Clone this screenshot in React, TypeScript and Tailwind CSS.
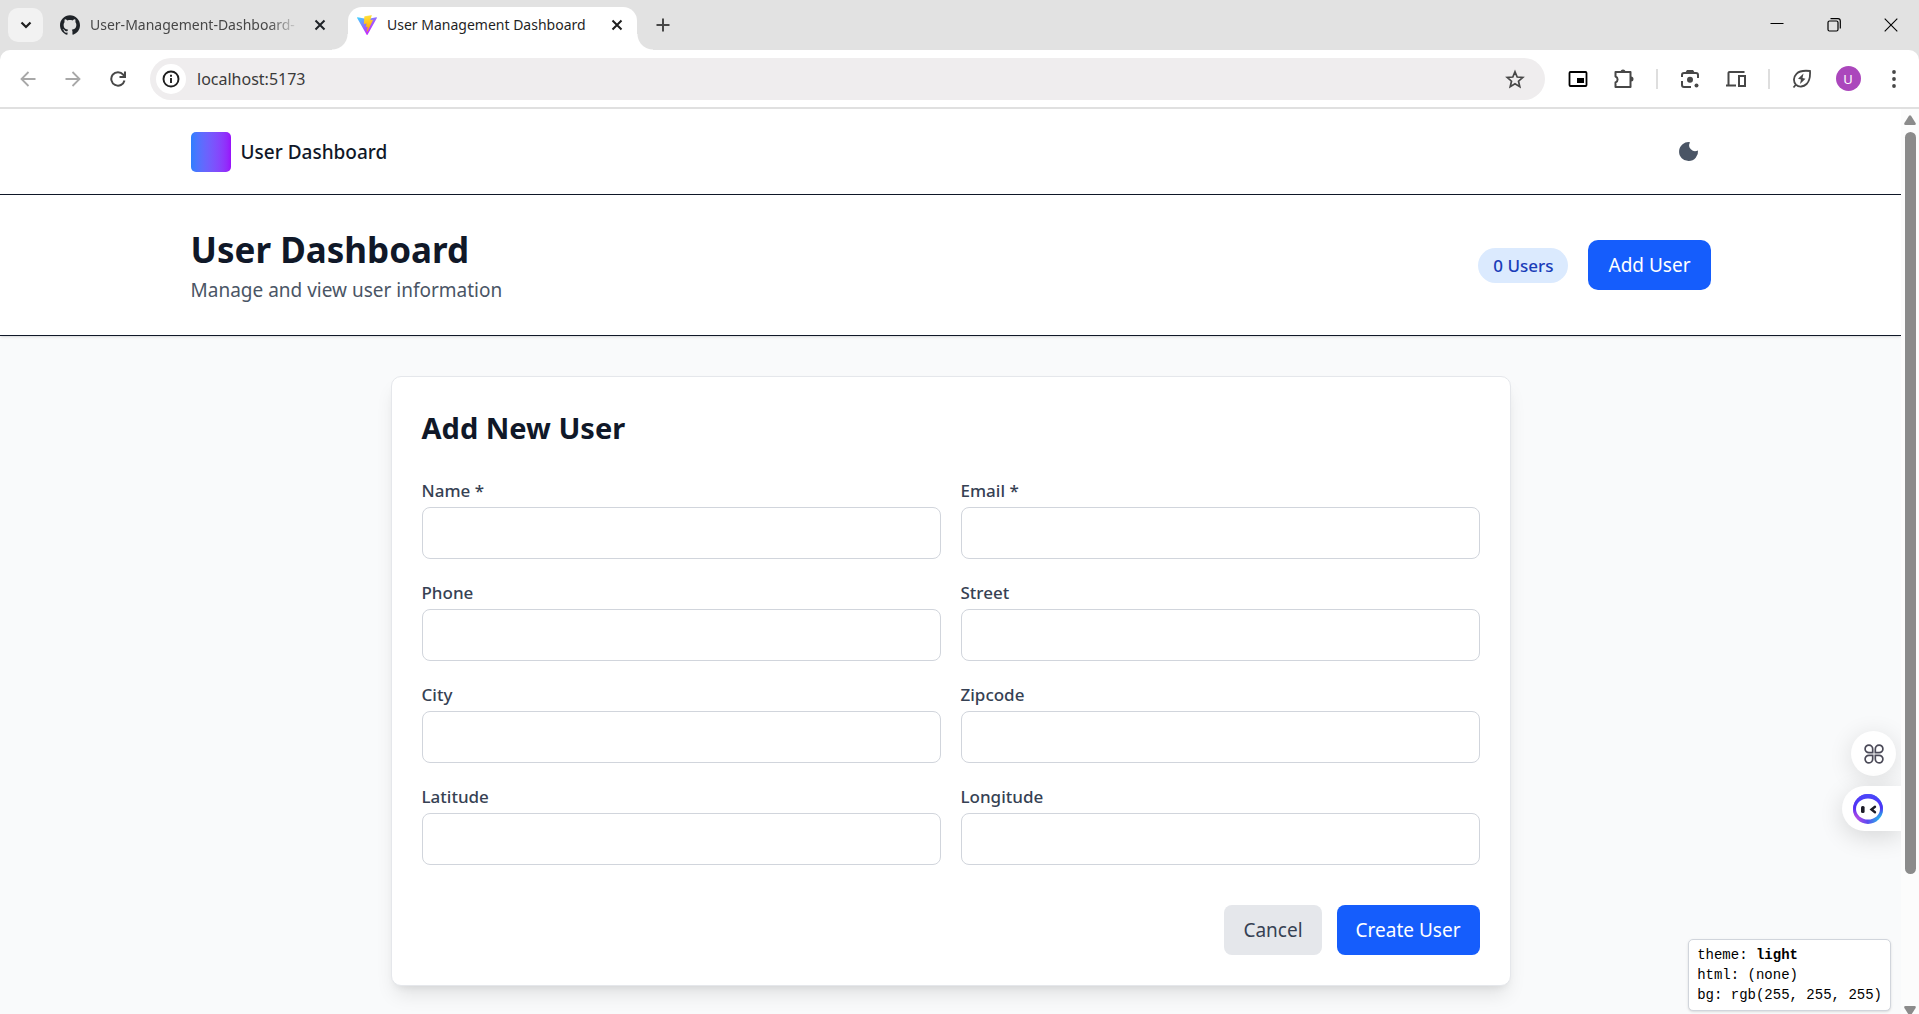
import type { ReactNode } from "react";
import { SiGithub } from "react-icons/si";

const fields = [
  { id: "name", label: "Name *", type: "text" },
  { id: "email", label: "Email *", type: "email" },
  { id: "phone", label: "Phone", type: "tel" },
  { id: "street", label: "Street", type: "text" },
  { id: "city", label: "City", type: "text" },
  { id: "zipcode", label: "Zipcode", type: "text" },
  { id: "latitude", label: "Latitude", type: "text" },
  { id: "longitude", label: "Longitude", type: "text" },
];

function ViteLogo() {
  return (
    <svg viewBox="0 0 256 257" className="size-5 shrink-0" aria-hidden="true">
      <defs>
        <linearGradient id="vite-a" x1="-.828%" x2="57.636%" y1="7.652%" y2="78.411%">
          <stop offset="0%" stopColor="#41D1FF" />
          <stop offset="100%" stopColor="#BD34FE" />
        </linearGradient>
        <linearGradient id="vite-b" x1="43.376%" x2="50.316%" y1="2.242%" y2="89.03%">
          <stop offset="0%" stopColor="#FFEA83" />
          <stop offset="8.333%" stopColor="#FFDD35" />
          <stop offset="100%" stopColor="#FFA800" />
        </linearGradient>
      </defs>
      <path fill="url(#vite-a)" d="M255.153 37.938L134.897 252.976c-2.483 4.44-8.862 4.466-11.382.048L.875 37.958c-2.746-4.814 1.371-10.646 6.827-9.67l120.385 21.517a6.537 6.537 0 0 0 2.322-.004l117.867-21.483c5.438-.991 9.574 4.796 6.877 9.62Z" />
      <path fill="url(#vite-b)" d="M185.432.063L96.44 17.501a3.268 3.268 0 0 0-2.634 3.014l-5.474 92.456a3.268 3.268 0 0 0 3.997 3.378l24.777-5.718c2.318-.535 4.413 1.507 3.936 3.838l-7.361 36.047c-.495 2.426 1.782 4.5 4.151 3.78l15.304-4.649c2.372-.72 4.652 1.36 4.15 3.788l-11.698 56.621c-.732 3.542 3.979 5.473 5.943 2.437l1.313-2.028l72.516-144.72c1.215-2.423-.88-5.186-3.54-4.672l-25.505 4.922c-2.396.462-4.435-1.77-3.759-4.114l16.646-57.705c.677-2.35-1.37-4.583-3.769-4.113Z" />
    </svg>
  );
}

function CloseTab({ label }: { label: string }) {
  return (
    <button type="button" aria-label={label} className="flex size-5 shrink-0 items-center justify-center">
      <svg viewBox="0 0 12 12" className="size-3" fill="none" stroke="currentColor" strokeWidth="2" aria-hidden="true">
        <path d="M1.5 1.5l9 9M10.5 1.5l-9 9" />
      </svg>
    </button>
  );
}

function TabStrip() {
  return (
    <div className="flex h-[50px] items-stretch bg-[#e2e2e2] pl-2">
      <button type="button" aria-label="Search tabs" className="mt-2 flex h-[34px] w-[35px] shrink-0 items-center justify-center rounded-[10px] bg-[#f2f2f2] text-[#1f1f1f]">
        <svg viewBox="0 0 12 8" className="h-2 w-3" fill="none" stroke="currentColor" strokeWidth="2.2" aria-hidden="true">
          <path d="M1.5 1.5L6 6l4.500-4.500" />
        </svg>
      </button>
      <div className="flex w-[305px] shrink-0 items-center gap-[10px] pl-[17px] pr-[18px] text-[#1f2328]">
        <SiGithub className="size-5 shrink-0" aria-hidden="true" />
        <span className="min-w-0 flex-1 overflow-hidden text-[14px] leading-5 whitespace-nowrap text-[#474747] [mask-image:linear-gradient(to_right,black_85%,transparent)]">
          User-Management-Dashboard-
        </span>
        <CloseTab label="Close User-Management-Dashboard tab" />
      </div>
      <div className="relative mt-[7px] flex w-[289px] shrink-0 items-center gap-[10px] rounded-t-[14px] bg-white pr-[10px] pb-[7px] pl-[9px] text-[#1f1f1f]">
        <span className="absolute bottom-0 -left-4 size-4 bg-[radial-gradient(circle_at_0_0,transparent_15px,white_16px)]" />
        <span className="absolute -right-4 bottom-0 size-4 bg-[radial-gradient(circle_at_100%_0,transparent_15px,white_16px)]" />
        <ViteLogo />
        <span className="min-w-0 flex-1 overflow-hidden text-[14px] leading-5 whitespace-nowrap">User Management Dashboard</span>
        <CloseTab label="Close User Management Dashboard tab" />
      </div>
      <button type="button" aria-label="New tab" className="ml-3 flex w-7 shrink-0 items-center justify-center text-[#474747]">
        <svg viewBox="0 0 14 14" className="size-[14px]" fill="none" stroke="currentColor" strokeWidth="2" aria-hidden="true">
          <path d="M7 .5v13M.5 7h13" />
        </svg>
      </button>
      <div className="ml-auto flex text-black">
        <button type="button" aria-label="Minimize" className="flex w-[57px] items-center justify-center">
          <svg viewBox="0 0 14 14" className="size-[14px]" stroke="currentColor" aria-hidden="true">
            <path d="M.5 5.500h13" />
          </svg>
        </button>
        <button type="button" aria-label="Restore" className="flex w-[57px] items-center justify-center">
          <svg viewBox="0 0 14 14" className="size-[14px]" fill="none" stroke="currentColor" strokeWidth="1.2" aria-hidden="true">
            <rect x="1" y="3" width="10" height="10" rx="1.500" />
            <path d="M3.500.7h7.500a2.300 2.300 0 0 1 2.300 2.300v7.500" />
          </svg>
        </button>
        <button type="button" aria-label="Close window" className="flex w-[57px] items-center justify-center">
          <svg viewBox="0 0 14 14" className="size-[14px]" fill="none" stroke="currentColor" strokeWidth="1.100" aria-hidden="true">
            <path d="M.7.7l12.600 12.600M13.300.7L.7 13.300" />
          </svg>
        </button>
      </div>
    </div>
  );
}

function ToolButton({ label, children }: { label: string; children: ReactNode }) {
  return (
    <button type="button" aria-label={label} className="flex h-10 w-[46px] shrink-0 items-center justify-center">
      {children}
    </button>
  );
}

function Separator() {
  return (
    <span className="flex w-5 shrink-0 justify-center">
      <span className="h-5 w-[2px] bg-[#dedede]" />
    </span>
  );
}

function Toolbar() {
  return (
    <div className="bg-[#e2e2e2]">
      <div className="flex h-[59px] items-center rounded-t-[10px] border-b-2 border-[#e0e0e0] bg-white pr-[2px] pl-[5px] text-[#474747]">
        <div className="flex shrink-0">
          <button type="button" aria-label="Back" className="flex h-10 w-[45px] items-center justify-center text-[#a8a8a8]">
            <svg viewBox="0 0 16 16" className="size-4" fill="none" stroke="currentColor" strokeWidth="1.800" aria-hidden="true">
              <path d="M15.500 8H2M8.500 1L1.500 8l7 7" />
            </svg>
          </button>
          <button type="button" aria-label="Forward" className="flex h-10 w-[45px] items-center justify-center text-[#a8a8a8]">
            <svg viewBox="0 0 16 16" className="size-4" fill="none" stroke="currentColor" strokeWidth="1.800" aria-hidden="true">
              <path d="M.5 8H14M7.500 1l7 7-7 7" />
            </svg>
          </button>
          <button type="button" aria-label="Reload" className="flex h-10 w-[45px] items-center justify-center">
            <svg viewBox="0 0 16 16" className="size-4" fill="none" stroke="currentColor" strokeWidth="2" aria-hidden="true">
              <path d="M14.500 9.500A6.700 6.700 0 1 1 13.200 3.700L14.500 5.500" />
              <path d="M15 .5V6H9.500" />
            </svg>
          </button>
        </div>
        <div className="ml-[10px] flex h-[42px] min-w-0 flex-1 items-center rounded-full bg-[#efedee] pl-[6px]">
          <button type="button" aria-label="View site information" className="flex size-[30px] shrink-0 items-center justify-center rounded-full bg-white text-[#1f1f1f]">
            <svg viewBox="0 0 18 18" className="size-[18px]" fill="none" stroke="currentColor" strokeWidth="1.900" aria-hidden="true">
              <circle cx="9" cy="9" r="7.500" />
              <path d="M9 8v5M9 4.800v2" />
            </svg>
          </button>
          <input aria-label="Address" defaultValue="localhost:5173" className="ml-[11px] min-w-0 flex-1 bg-transparent text-[16px] leading-6 text-[#3a3a3a] outline-none" />
          <button type="button" aria-label="Bookmark this tab" className="mr-[10px] flex size-10 shrink-0 items-center justify-center">
            <svg viewBox="0 0 20 20" className="size-5" fill="none" stroke="currentColor" strokeWidth="1.700" aria-hidden="true">
              <path d="M10 2.800l2.200 5.200 5.600.5-4.300 3.700 1.300 5.500L10 14.800l-4.800 2.900 1.300-5.500L2.200 8.500 7.800 8z" />
            </svg>
          </button>
        </div>
        <div className="ml-[10px] flex shrink-0 items-center">
          <ToolButton label="Picture in picture">
            <svg viewBox="0 0 20 16" className="h-4 w-5 text-black" aria-hidden="true">
              <rect x="1.500" y="1" width="17" height="14" rx="1" fill="none" stroke="currentColor" strokeWidth="1.800" />
              <rect x="9" y="7" width="7" height="5" fill="currentColor" />
            </svg>
          </ToolButton>
          <ToolButton label="Extensions">
            <svg viewBox="0 0 22 22" className="size-[22px]" aria-hidden="true">
              <path d="M2.500 4h15v15h-15v-4.500a3.200 3.200 0 0 0 0-6z" fill="none" stroke="currentColor" strokeWidth="2" strokeLinejoin="round" />
              <path d="M7.500 4a2.500 2.500 0 0 1 5 0zM18 8.500a2.500 2.500 0 0 1 0 5z" fill="currentColor" />
            </svg>
          </ToolButton>
          <Separator />
          <ToolButton label="Search with Lens">
            <svg viewBox="0 0 20 20" className="size-5" fill="none" stroke="currentColor" strokeWidth="2" aria-hidden="true">
              <path d="M2 8V6a2 2 0 0 1 2-2h12a2 2 0 0 1 2 2v3M2 12v4a2 2 0 0 0 2 2h7M6.500 3.500l1-1.500h5l1 1.500" />
              <circle cx="10" cy="10.800" r="3" fill="currentColor" stroke="none" />
              <circle cx="16.500" cy="16.500" r="2" fill="currentColor" stroke="none" />
            </svg>
          </ToolButton>
          <ToolButton label="Send to your devices">
            <svg viewBox="0 0 22 18" className="h-[18px] w-[22px]" fill="none" stroke="currentColor" strokeWidth="2" aria-hidden="true">
              <path d="M19.500 2H4.500a1 1 0 0 0-1 1v12M1 15.500h10" />
              <rect x="14" y="6" width="6" height="10" />
            </svg>
          </ToolButton>
          <Separator />
          <ToolButton label="Energy saver">
            <svg viewBox="0 0 20 20" className="size-5" fill="none" stroke="currentColor" strokeWidth="1.800" aria-hidden="true">
              <path d="M18 2c-5-.6-10.500-.2-13.500 2.800-3.300 3.300-3.200 8-.6 10.800 2.900 2.800 7.600 2.500 10.700-.6C17.900 11.700 18.300 7 18 2zM4 15.500L1.500 18.500" />
              <path d="M11.500 4.500L6 9.800l3 .8-1 4.400 5.500-5.300-3-.8z" fill="currentColor" stroke="none" />
            </svg>
          </ToolButton>
          <ToolButton label="Profile">
            <span className="flex size-[25px] items-center justify-center rounded-full bg-[#ab47bc] text-[13px] leading-4 text-white">U</span>
          </ToolButton>
          <ToolButton label="Browser menu">
            <svg viewBox="0 0 4 18" className="h-[18px] w-1" fill="currentColor" aria-hidden="true">
              <circle cx="2" cy="2" r="1.900" />
              <circle cx="2" cy="9" r="1.900" />
              <circle cx="2" cy="16" r="1.900" />
            </svg>
          </ToolButton>
        </div>
      </div>
    </div>
  );
}

function Navbar() {
  return (
    <nav className="border-b border-[#101828] bg-white">
      <div className="mx-auto flex h-[85px] max-w-[1600px] items-center justify-between px-10">
        <div className="flex items-center gap-[10px]">
          <div className="size-10 rounded-[5px] bg-linear-to-r from-[#2b7fff] to-[#9810fa]" />
          <span className="text-[19px] leading-[30px] font-medium text-[#101828]">User Dashboard</span>
        </div>
        <button type="button" aria-label="Toggle theme" className="rounded-lg p-[10px] text-[#4a5565]">
          <svg viewBox="0 0 25 25" className="size-[25px]" fill="currentColor" aria-hidden="true">
            <path d="M14 3.200A6 6 0 0 0 22 11.500A9.500 9.500 0 1 1 14 3.200z" />
          </svg>
        </button>
      </div>
    </nav>
  );
}

function PageHeader() {
  return (
    <header className="relative border-b border-[#101828] bg-white shadow-sm">
      <div className="mx-auto flex max-w-[1600px] items-center justify-between px-10 py-[30px]">
        <div>
          <h1 className="pt-[2px] text-[35px] leading-[45px] font-bold text-[#101828]">User Dashboard</h1>
          <p className="mt-[3px] text-[19px] leading-[30px] text-[#4a5565]">Manage and view user information</p>
        </div>
        <div className="flex items-center gap-5">
          <span className="rounded-full bg-[#dbeafe] px-[15px] py-[5px] text-[17px] leading-[25px] font-medium text-[#193cb8]">0 Users</span>
          <button type="button" className="rounded-[10px] bg-[#155dfc] px-5 py-[10px] text-[19px] leading-[30px] text-white">Add User</button>
        </div>
      </div>
    </header>
  );
}

function UserForm() {
  return (
    <form className="mx-auto max-w-[1120px] rounded-[10px] border border-[#e5e7eb] bg-white p-[30px] shadow-[0_12px_19px_-4px_rgba(0,0,0,0.1),0_5px_8px_-5px_rgba(0,0,0,0.1)]">
      <h2 className="mb-7 text-[29px] leading-[42px] font-bold text-[#101828]">Add New User</h2>
      <div className="grid grid-cols-2 gap-5">
        {fields.map((field) => (
          <div key={field.id}>
            <label htmlFor={field.id} className="mb-[2px] block text-[17px] leading-7 font-medium text-[#364153]">
              {field.label}
            </label>
            <input id={field.id} type={field.type} className="block h-[52px] w-full rounded-lg border border-[#d1d5dc] bg-white px-[15px] text-[19px] outline-none" />
          </div>
        ))}
      </div>
      <div className="mt-10 flex justify-end gap-[15px]">
        <button type="button" className="rounded-lg bg-[#e5e7eb] px-[19px] py-[10px] text-[19px] leading-[30px] text-[#364153]">Cancel</button>
        <button type="submit" className="rounded-lg bg-[#155dfc] px-[19px] py-[10px] text-[19px] leading-[30px] text-white">Create User</button>
      </div>
    </form>
  );
}

function FloatingTools() {
  return (
    <div className="absolute right-0 bottom-[183px] flex flex-col items-end gap-[10px]">
      <button type="button" aria-label="Assistant tools" className="mr-[5px] flex size-[45px] items-center justify-center rounded-full bg-white text-[#4b4a58] shadow-[0_4px_24px_rgba(0,0,0,0.12)]">
        <svg viewBox="0 0 20 20" className="size-5" fill="none" stroke="currentColor" strokeWidth="1.700" aria-hidden="true">
          <path d="M8.700 8.700H5A3.800 3.800 0 1 1 8.700 5z" />
          <path d="M11.300 8.700H15A3.800 3.800 0 1 0 11.300 5z" />
          <path d="M8.700 11.300H5A3.800 3.800 0 1 0 8.700 15z" />
          <path d="M11.300 11.300H15A3.800 3.800 0 1 1 11.300 15z" />
        </svg>
      </button>
      <button type="button" aria-label="Open assistant" className="flex h-[45px] w-[59px] items-center rounded-l-full bg-white pl-[11px] shadow-[0_6px_24px_rgba(0,0,0,0.14)]">
        <svg viewBox="0 0 30 30" className="size-[30px]" aria-hidden="true">
          <defs>
            <linearGradient id="bot-ring" x1="0.100" y1="0.750" x2="0.950" y2="0.750">
              <stop offset="0" stopColor="#b84ae6" />
              <stop offset="0.450" stopColor="#5b4bf0" />
              <stop offset="1" stopColor="#1fc3e6" />
            </linearGradient>
            <linearGradient id="bot-top" x1="0" y1="0" x2="0" y2="1">
              <stop offset="0" stopColor="#4a48fa" />
              <stop offset="0.450" stopColor="#5030f5" />
              <stop offset="0.800" stopColor="#5030f5" stopOpacity="0" />
            </linearGradient>
          </defs>
          <circle cx="15" cy="15" r="15" fill="url(#bot-ring)" />
          <circle cx="15" cy="15" r="15" fill="url(#bot-top)" />
          <ellipse cx="15" cy="15" rx="12" ry="10.500" fill="#fff" />
          <rect x="8" y="12" width="3.600" height="7" rx="1.500" fill="#1c1c28" />
          <path d="M22 12.800l-3.500 2.700 3.500 2.700" fill="none" stroke="#1c1c28" strokeWidth="2.400" strokeLinecap="round" />
        </svg>
      </button>
    </div>
  );
}

function ThemeReadout() {
  return (
    <div className="absolute right-[10px] bottom-[3px] rounded-[5px] border border-[#d1d5dc] bg-white px-2 py-[5px] font-['Liberation_Mono',monospace] text-[14px] leading-5 text-black shadow-sm">
      <div>theme: <strong>light</strong></div>
      <div>html: (none)</div>
      <div>bg: rgb(255, 255, 255)</div>
    </div>
  );
}

function Scrollbar() {
  return (
    <div className="flex w-[18px] shrink-0 flex-col items-center bg-[#fcfcfc] pt-[6px] text-[#8b8b8b]" aria-hidden="true">
      <svg viewBox="0 0 12 10" className="h-[10px] w-3 shrink-0" fill="currentColor">
        <path d="M5 .8Q6-.4 7 .8l4.600 7.200q.8 2-1.100 2h-9Q-.4 10 .4 8z" />
      </svg>
      <div className="mt-[7px] h-[742px] w-[11px] rounded-full bg-[#8b8b8b]" />
      <svg viewBox="0 0 12 10" className="mt-auto -mb-[2px] h-[10px] w-3 shrink-0" fill="currentColor">
        <path d="M5 9.200Q6 10.400 7 9.200L11.600 2q.8-2-1.100-2h-9Q-.4 0 .4 2z" />
      </svg>
    </div>
  );
}

export default function App() {
  return (
    <div className="flex h-screen flex-col overflow-hidden bg-white font-['Noto_Sans',sans-serif]">
      <TabStrip />
      <Toolbar />
      <div className="flex min-h-0 flex-1">
        <div className="relative min-w-0 flex-1 overflow-hidden bg-[#f9fafb]">
          <Navbar />
          <PageHeader />
          <main className="px-10 py-10">
            <UserForm />
          </main>
          <FloatingTools />
          <ThemeReadout />
        </div>
        <Scrollbar />
      </div>
    </div>
  );
}
